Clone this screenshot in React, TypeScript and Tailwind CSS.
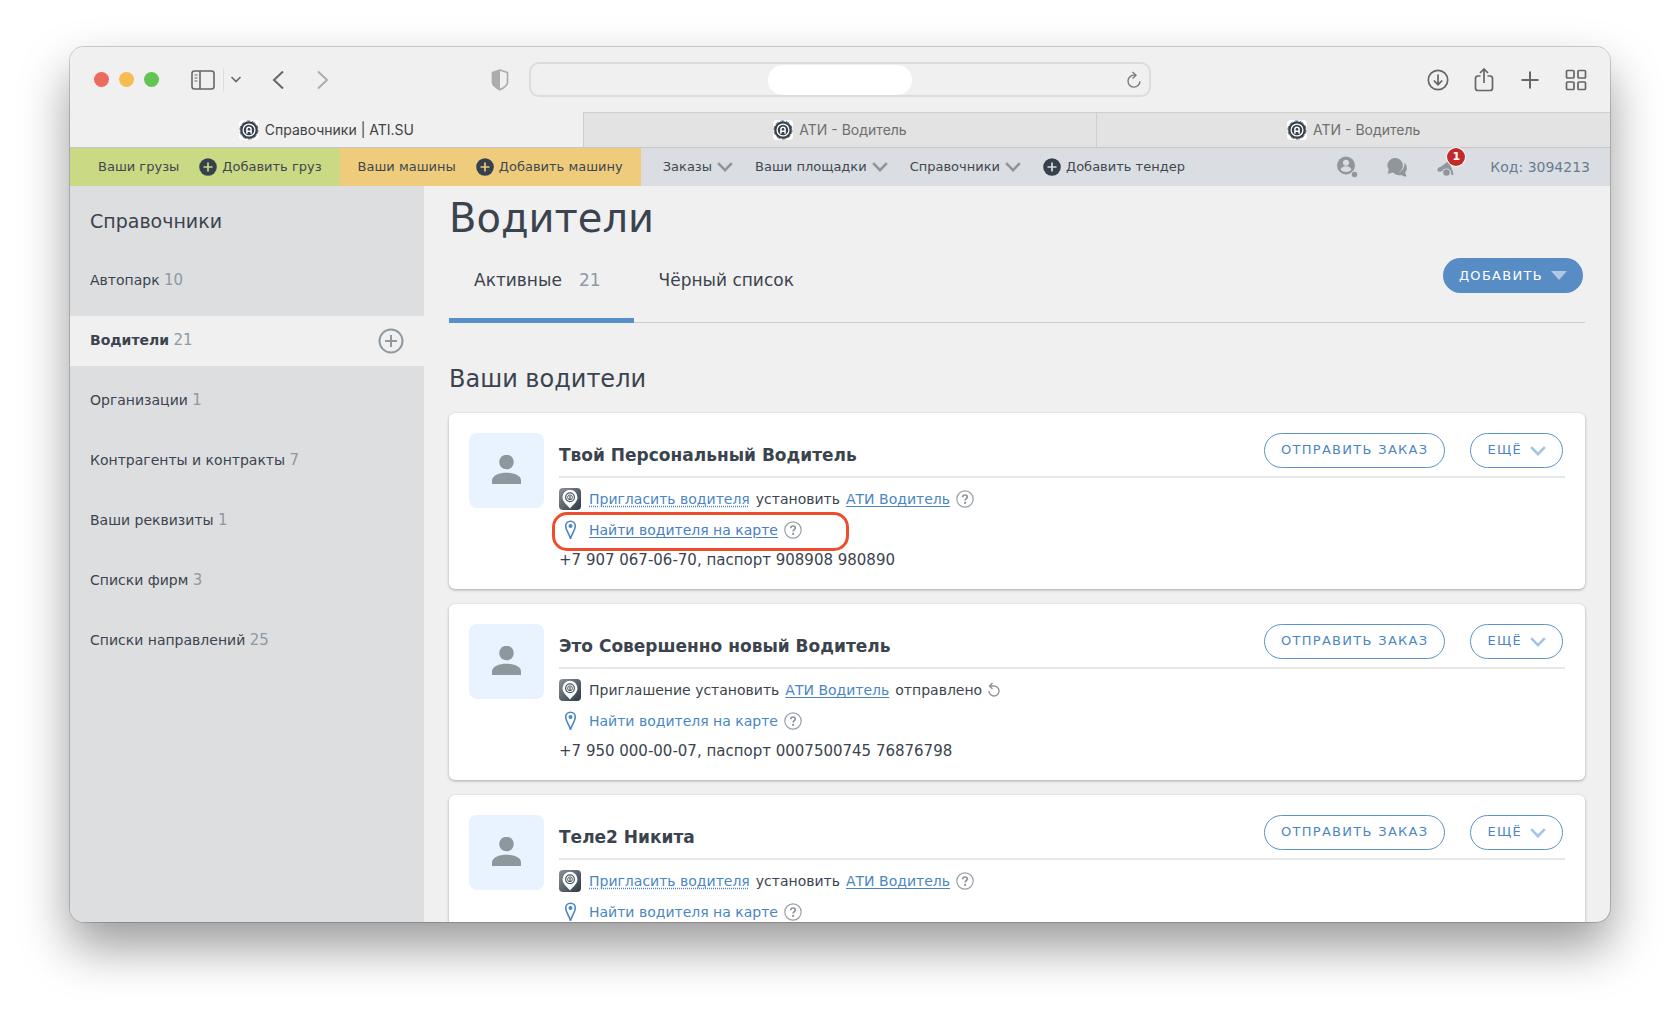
import type { ReactNode } from "react";

type Driver = {
  name: string;
  invite: "invite" | "sent";
  contacts?: string;
  highlighted?: boolean;
};

const DRIVERS: Driver[] = [
  {
    name: "Твой Персональный Водитель",
    invite: "invite",
    contacts: "+7 907 067-06-70, паспорт 908908 980890",
    highlighted: true,
  },
  {
    name: "Это Совершенно новый Водитель",
    invite: "sent",
    contacts: "+7 950 000-00-07, паспорт 0007500745 76876798",
  },
  { name: "Теле2 Никита", invite: "invite" },
];

const SECTIONS = [
  { label: "Автопарк", count: 10 },
  { label: "Водители", count: 21, active: true },
  { label: "Организации", count: 1 },
  { label: "Контрагенты и контракты", count: 7 },
  { label: "Ваши реквизиты", count: 1 },
  { label: "Списки фирм", count: 3 },
  { label: "Списки направлений", count: 25 },
];

const BROWSER_TABS = ["Справочники | ATI.SU", "АТИ - Водитель", "АТИ - Водитель"];

/* ---------- Icons ---------- */

function Favicon() {
  return (
    <svg viewBox="0 0 20 20" className="size-5 shrink-0" aria-hidden="true">
      <rect width="20" height="20" rx="4" fill="#fff" />
      <circle cx="10" cy="10" r="8.8" fill="#36414d" />
      <circle cx="10" cy="10" r="9.1" fill="none" stroke="#36414d" strokeWidth="0.7" strokeDasharray="3.9 1.8" />
      <circle cx="10" cy="10" r="5.9" fill="none" stroke="#fff" strokeWidth="1.3" />
      <path d="M7.9 13.8V9.300a2.100 2.100 0 0 1 4.200 0v4.500M8 11.300h4" fill="none" stroke="#fff" strokeWidth="1.500" />
    </svg>
  );
}

function PlusDot() {
  return (
    <svg viewBox="0 0 18 18" className="size-[18px] shrink-0" aria-hidden="true">
      <circle cx="9" cy="9" r="8.8" fill="#36414d" />
      <path d="M9 4.5v9M4.5 9h9" stroke="currentColor" strokeWidth="1.7" />
    </svg>
  );
}

function Chevron({ className }: { className: string }) {
  return (
    <svg viewBox="0 0 16 10" className={className} aria-hidden="true">
      <path d="M1.2 1.2 8 8.2l6.8-7" fill="none" stroke="currentColor" strokeWidth="2.6" />
    </svg>
  );
}

function AppPinIcon() {
  return (
    <svg viewBox="0 0 22 22" className="size-[22px] shrink-0" aria-hidden="true">
      <defs>
        <linearGradient id="app-pin" x1="0" y1="0" x2="1" y2="1">
          <stop offset="0" stopColor="#8b939b" />
          <stop offset="1" stopColor="#2c3844" />
        </linearGradient>
      </defs>
      <rect width="22" height="22" rx="4" fill="url(#app-pin)" />
      <path d="M11 20.5C8.500 17 3.500 14 3.500 9.200a7.500 7.500 0 0 1 15 0c0 4.800-5 7.800-7.500 11.300z" fill="#fff" />
      <circle cx="11" cy="9.300" r="4.400" fill="none" stroke="#4a5561" strokeWidth="1.200" />
      <circle cx="11" cy="9.300" r="2.400" fill="none" stroke="#4a5561" strokeWidth="1" />
      <path d="M11 8v4" stroke="#4a5561" strokeWidth="1.200" />
    </svg>
  );
}

function MapPinIcon() {
  return (
    <svg viewBox="0 0 22 20" className="h-5 w-[22px] shrink-0" aria-hidden="true">
      <path
        d="M11.500 18.800C10.800 14.500 6.700 10.500 6.700 6a4.800 4.800 0 0 1 9.600 0c0 4.500-4.100 8.500-4.800 12.800z"
        fill="none"
        stroke="#4a86c5"
        strokeWidth="1.600"
      />
      <circle cx="11.500" cy="6" r="2" fill="#4a86c5" />
    </svg>
  );
}

function HelpButton() {
  return (
    <button type="button" aria-label="Подсказка" className="shrink-0">
      <svg viewBox="0 0 18 18" className="size-[18px]" aria-hidden="true">
        <circle cx="9" cy="9" r="8.200" fill="none" stroke="#9aa1a7" strokeWidth="1.200" />
        <path
          d="M6.700 7.200c0-1.400 1-2.200 2.300-2.200s2.300.8 2.300 2c0 1.600-2.200 1.700-2.200 3.500"
          fill="none"
          stroke="#8d959b"
          strokeWidth="1.700"
        />
        <circle cx="9.100" cy="12.900" r="1.100" fill="#8d959b" />
      </svg>
    </button>
  );
}

function ToolbarIcon({ label, className = "", children }: { label: string; className?: string; children: ReactNode }) {
  return (
    <button type="button" aria-label={label} className={`shrink-0 ${className}`}>
      <svg viewBox="0 0 24 24" className="size-6" fill="none" stroke="currentColor" strokeWidth="1.700" aria-hidden="true">
        {children}
      </svg>
    </button>
  );
}

/* ---------- Browser chrome ---------- */

function Toolbar() {
  return (
    <div className="flex h-[65px] shrink-0 items-center bg-[#f0f0f0] px-6 text-[#666]">
      <div className="flex flex-1 items-center">
        <div className="flex gap-[10px]">
          <span className="size-[15px] rounded-full bg-[#ed6a5e]" />
          <span className="size-[15px] rounded-full bg-[#f5bd4f]" />
          <span className="size-[15px] rounded-full bg-[#61c454]" />
        </div>
        <button type="button" aria-label="Боковая панель" className="ml-8">
          <svg viewBox="0 0 24 20" className="h-5 w-6" fill="none" stroke="currentColor" aria-hidden="true">
            <rect x="1" y="1" width="22" height="18" rx="2.500" strokeWidth="1.600" />
            <path d="M9 1v18" strokeWidth="1.600" />
            <path d="M3.500 5h3M3.500 8h3M3.500 11h3" strokeWidth="1.100" />
          </svg>
        </button>
        <span className="ml-2 h-6 w-px bg-[#dedede]" />
        <button type="button" aria-label="Группы вкладок" className="ml-[7px]">
          <svg viewBox="0 0 10 8" className="h-2 w-[10px]" aria-hidden="true">
            <path d="m1 1.500 4 4 4-4" fill="none" stroke="#6b6b6b" strokeWidth="1.700" strokeLinecap="round" />
          </svg>
        </button>
        <ToolbarIcon label="Назад" className="ml-[25px]">
          <path d="M17 3.500 8 12l9 8.500" strokeWidth="2" />
        </ToolbarIcon>
        <ToolbarIcon label="Вперёд" className="ml-5 text-[#adadad]">
          <path d="m8 3.500 9 8.500-9 8.500" strokeWidth="2" />
        </ToolbarIcon>
        <button type="button" aria-label="Отчёт о конфиденциальности" className="mr-5 ml-auto">
          <svg viewBox="0 0 18 22" className="h-[22px] w-[18px]" aria-hidden="true">
            <path d="M9 1 1.500 3.500v10c0 3 4 5.500 7.500 7.500z" fill="#acacac" />
            <path
              d="M9 1 1.500 3.500v10c0 3 4 5.500 7.500 7.300 3.500-1.800 7.500-4.300 7.500-7.300v-10z"
              fill="none"
              stroke="#acacac"
              strokeWidth="1.700"
              strokeLinejoin="round"
            />
          </svg>
        </button>
      </div>

      <div className="flex h-[35px] w-[622px] items-center rounded-[10px] border-2 border-[#dcdcdc] px-2">
        <div className="flex-1" />
        <input aria-label="Адрес" className="h-[30px] w-36 rounded-full bg-white text-center text-sm outline-none" />
        <div className="flex flex-1 justify-end">
          <button type="button" aria-label="Обновить">
            <svg viewBox="0 0 14 18" className="h-[18px] w-[14px]" fill="none" stroke="#7c7c7c" strokeWidth="1.400" aria-hidden="true">
              <path d="M8 4.200a6 6 0 1 0 5 6M5.500 1 9 4.300 5.500 7.500" />
            </svg>
          </button>
        </div>
      </div>

      <div className="flex flex-1 items-center justify-end gap-[22px]">
        <ToolbarIcon label="Загрузки">
          <circle cx="12" cy="12" r="9.700" />
          <path d="M12 6.500v10M7.800 12.500 12 16.700l4.200-4.200" />
        </ToolbarIcon>
        <ToolbarIcon label="Поделиться">
          <path d="M8.500 8H6a2.500 2.500 0 0 0-2.500 2.500V20A2.500 2.500 0 0 0 6 22.500h12a2.500 2.500 0 0 0 2.500-2.500v-9.500A2.500 2.500 0 0 0 18 8h-2.500M12 15V1M8 5l4-4 4 4" />
        </ToolbarIcon>
        <ToolbarIcon label="Новая вкладка">
          <path d="M12 3.500v17M3.500 12h17" strokeWidth="2" />
        </ToolbarIcon>
        <ToolbarIcon label="Обзор вкладок" className="-mr-[2px]">
          <rect x="2.500" y="2.500" width="7.500" height="7.500" rx="1" />
          <rect x="14" y="2.500" width="7.500" height="7.500" rx="1" />
          <rect x="2.500" y="14" width="7.500" height="7.500" rx="1" />
          <rect x="14" y="14" width="7.500" height="7.500" rx="1" />
        </ToolbarIcon>
      </div>
    </div>
  );
}

function BrowserTabs() {
  return (
    <div className="flex h-[35px] shrink-0 bg-[#f0f0f0] font-[Inter,'Liberation_Sans',sans-serif] text-sm">
      {BROWSER_TABS.map((title, i) => (
        <button
          key={i}
          type="button"
          className={`flex flex-1 items-center justify-center gap-[6px] ${
            i === 0 ? "text-[#424242]" : "border-t border-l border-[#cfcfcf] bg-[#e3e3e3] text-[#6f6f6f]"
          }`}
        >
          <Favicon />
          {title}
        </button>
      ))}
    </div>
  );
}

/* ---------- Site header ---------- */

function NavLink({ children }: { children: ReactNode }) {
  return (
    <a href="#" className="flex items-center gap-[5px] whitespace-nowrap">
      {children}
    </a>
  );
}

function SiteNav() {
  return (
    <nav className="flex h-[39px] shrink-0 border-t border-[#c3c6ca] bg-[#dadde2] text-[13px] text-[#3f4851]">
      <div className="flex items-center gap-5 bg-[#cad983] pr-[18px] pl-7">
        <NavLink>Ваши грузы</NavLink>
        <NavLink>
          <span className="text-[#cad983]"><PlusDot /></span>
          Добавить груз
        </NavLink>
      </div>
      <div className="flex items-center gap-5 bg-[#eecc7b] px-[18px]">
        <NavLink>Ваши машины</NavLink>
        <NavLink>
          <span className="text-[#eecc7b]"><PlusDot /></span>
          Добавить машину
        </NavLink>
      </div>
      <div className="flex flex-1 items-center gap-[22px] pr-5 pl-[22px]">
        {["Заказы", "Ваши площадки", "Справочники"].map((label) => (
          <NavLink key={label}>
            {label}
            <Chevron className="h-[10px] w-4 text-[#8f979d]" />
          </NavLink>
        ))}
        <NavLink>
          <span className="text-[#dadde2]"><PlusDot /></span>
          Добавить тендер
        </NavLink>

        <div className="ml-auto flex items-center gap-7">
          <button type="button" aria-label="Профиль">
            <svg viewBox="0 0 22 22" className="size-[22px]" fill="#8f979d" aria-hidden="true">
              <circle cx="10" cy="9.500" r="9" />
              <circle cx="10" cy="6.800" r="3" fill="#dadde2" />
              <path d="M4.800 14c0-5 10.400-5 10.400 0-2.500 2.500-7.900 2.500-10.400 0z" fill="#dadde2" />
              <circle cx="18.500" cy="18.500" r="3.300" stroke="#dadde2" strokeWidth="1" />
            </svg>
          </button>
          <button type="button" aria-label="Сообщения">
            <svg viewBox="0 0 22 22" className="size-[22px]" fill="#8f979d" aria-hidden="true">
              <path d="M18.500 6.500c3 3 3 7.500.7 10l1.300 4c-3 0-4-.7-5-1.500-3.500.8-6-.2-7.500-2 7 .5 11-4.500 10.500-10.500z" />
              <path d="M9.500 2a7.600 7.600 0 1 1-3.300 14.500c-1.200.8-2.500 1.200-4.700 1l1.300-3.700A7.600 7.600 0 0 1 9.500 2z" />
            </svg>
          </button>
          <button type="button" aria-label="Уведомления: 1" className="relative">
            <svg viewBox="0 0 22 22" className="size-[22px]" aria-hidden="true">
              <path d="M12 3c-.5 3-3 5.500-9 8.500-2.300 1.200-2 4 .3 4.300.9.100 2-.3 2.700-.8 1-3 6.500-5 10-1.500z" fill="#8f979d" />
              <path d="M5.500 14.500c1-4 8.500-4.500 10.300.5l.7 4" fill="none" stroke="#8f979d" strokeWidth="2" />
              <circle cx="10.500" cy="16.500" r="3.300" fill="#8f979d" />
            </svg>
            <span className="absolute -top-2 left-[11px] flex size-[18px] items-center justify-center rounded-full bg-[#c22a2a] text-[11px] font-bold text-white ring-1 ring-white">
              1
            </span>
          </button>
          <span className="ml-1 text-sm whitespace-nowrap text-[#667c91]">Код: 3094213</span>
        </div>
      </div>
    </nav>
  );
}

/* ---------- Page ---------- */

function Sidebar() {
  return (
    <aside className="w-[354px] shrink-0 bg-[#dddee0]">
      <h2 className="px-5 pt-[21px] pb-[21px] text-[19px] leading-7">Справочники</h2>
      <ul className="flex flex-col gap-[10px]">
        {SECTIONS.map(({ label, count, active }) => (
          <li
            key={label}
            className={`flex h-[50px] items-center justify-between px-5 text-sm ${active ? "bg-[#f0f0f0]" : ""}`}
          >
            <a href="#">
              <span className={active ? "font-bold" : ""}>{label}</span>{" "}
              <span className="text-[15px] text-[#8f999f]">{count}</span>
            </a>
            {active && (
              <button type="button" aria-label="Добавить водителя">
                <svg viewBox="0 0 26 26" className="size-[26px]" fill="none" stroke="#8f999f" strokeWidth="2" aria-hidden="true">
                  <circle cx="13" cy="13" r="11.500" />
                  <path d="M13 7v12M7 13h12" />
                </svg>
              </button>
            )}
          </li>
        ))}
      </ul>
    </aside>
  );
}

function AppLink() {
  return (
    <a href="#" className="text-[#4a86c5] underline underline-offset-2">
      АТИ Водитель
    </a>
  );
}

function DriverCard({ driver }: { driver: Driver }) {
  return (
    <article className="flex h-44 shrink-0 gap-[15px] rounded-md bg-white p-5 shadow-[0_1px_3px_rgba(0,0,0,0.3)]">
      <div className="flex size-[75px] shrink-0 items-center justify-center rounded-lg bg-[#e8f3ff]">
        <svg viewBox="0 0 30 32" className="h-8 w-[30px]" fill="#8f979e" aria-hidden="true">
          <circle cx="14.500" cy="7" r="7.300" />
          <path d="M0 29v-3.500C0 15 29 15 29 25.500V29z" />
        </svg>
      </div>

      <div className="min-w-0 flex-1 text-sm">
        <div className="flex h-[45px] items-start justify-between border-b-2 border-[#e6e7e8]">
          <h3 className="pt-[10px] text-[17px] leading-6 font-bold">{driver.name}</h3>
          <div className="flex gap-[25px] text-[13px] text-[#4a86c5]">
            <button type="button" className="h-[35px] rounded-full border border-[#5b92cc] px-4 tracking-widest uppercase">
              Отправить заказ
            </button>
            <button type="button" className="mr-[2px] flex h-[35px] items-center gap-2 rounded-full border border-[#5b92cc] px-4 tracking-widest uppercase">
              Ещё
              <Chevron className="h-[10px] w-4 text-[#a5c3e3]" />
            </button>
          </div>
        </div>

        <div className="mt-[10px] flex h-[22px] items-center gap-2">
          <AppPinIcon />
          <p className="flex items-center gap-[6px]">
            {driver.invite === "invite" ? (
              <>
                <a href="#" className="text-[#4a86c5] underline decoration-dotted underline-offset-2">
                  Пригласить водителя
                </a>
                установить
                <AppLink />
                <HelpButton />
              </>
            ) : (
              <>
                Приглашение установить
                <AppLink />
                отправлено
                <button type="button" aria-label="Отправить повторно">
                  <svg viewBox="0 0 12 16" className="h-4 w-3" fill="none" stroke="#8d959b" strokeWidth="1.400" aria-hidden="true">
                    <path d="M4.500 1 1.500 4l3 3M2 4h4a5 5 0 1 1-5 5" />
                  </svg>
                </button>
              </>
            )}
          </p>
        </div>

        <div className="relative mt-[9px] flex h-[22px] items-center gap-2">
          <MapPinIcon />
          <p className="flex items-center gap-[6px]">
            <a
              href="#"
              className={driver.highlighted ? "text-[#4a80c0] underline underline-offset-2" : "text-[#4a86c5]"}
            >
              Найти водителя на карте
            </a>
            <HelpButton />
          </p>
          {driver.highlighted && (
            <span className="pointer-events-none absolute -top-[7px] -left-[7px] h-[39px] w-[297px] rounded-[15px] border-3 border-[#ee4d2b]" />
          )}
        </div>

        {driver.contacts && <p className="mt-2 text-[15px] leading-[22px]">{driver.contacts}</p>}
      </div>
    </article>
  );
}

export default function App() {
  return (
    <div className="flex h-screen bg-white px-[70px] pt-[47px] pb-[93px] font-['DejaVu_Sans',sans-serif] text-[#3b444e]">
      <div className="flex min-w-0 flex-1 flex-col overflow-hidden rounded-[14px] bg-[#f0f0f0] shadow-[0_0_0_1px_rgba(0,0,0,0.18),0_25px_50px_rgba(0,0,0,0.4)]">
        <Toolbar />
        <BrowserTabs />
        <SiteNav />
        <div className="flex min-h-0 flex-1">
          <Sidebar />
          <main className="flex min-w-0 flex-1 flex-col overflow-hidden px-[25px]">
            <h1 className="mt-[5px] text-[40px] leading-[55px]">Водители</h1>
            <div className="flex h-[77px] shrink-0 border-b border-[#cfcfcf] text-[17px]">
              <button type="button" className="flex h-[77px] items-start gap-[17px] border-b-[5px] border-[#5790c9] pt-[22px] pr-[33px] pl-[25px]">
                <span>Активные</span>
                <span className="text-[#8f999f]">21</span>
              </button>
              <button type="button" className="flex items-start px-[25px] pt-[22px]">Чёрный список</button>
              <button
                type="button"
                className="mt-3 mr-[2px] ml-auto flex h-[35px] items-center gap-2 rounded-full bg-[#578cc5] px-4 text-[13px] font-medium tracking-widest text-white uppercase"
              >
                Добавить
                <svg viewBox="0 0 16 9" className="h-[9px] w-4" fill="#adc7e4" aria-hidden="true">
                  <path d="M0 0h16L8 9z" />
                </svg>
              </button>
            </div>

            <h2 className="mt-[38px] mb-4 text-2xl leading-9">Ваши водители</h2>
            <div className="flex flex-col gap-[15px]">
              {DRIVERS.map((driver) => (
                <DriverCard key={driver.name} driver={driver} />
              ))}
            </div>
          </main>
        </div>
      </div>
    </div>
  );
}
